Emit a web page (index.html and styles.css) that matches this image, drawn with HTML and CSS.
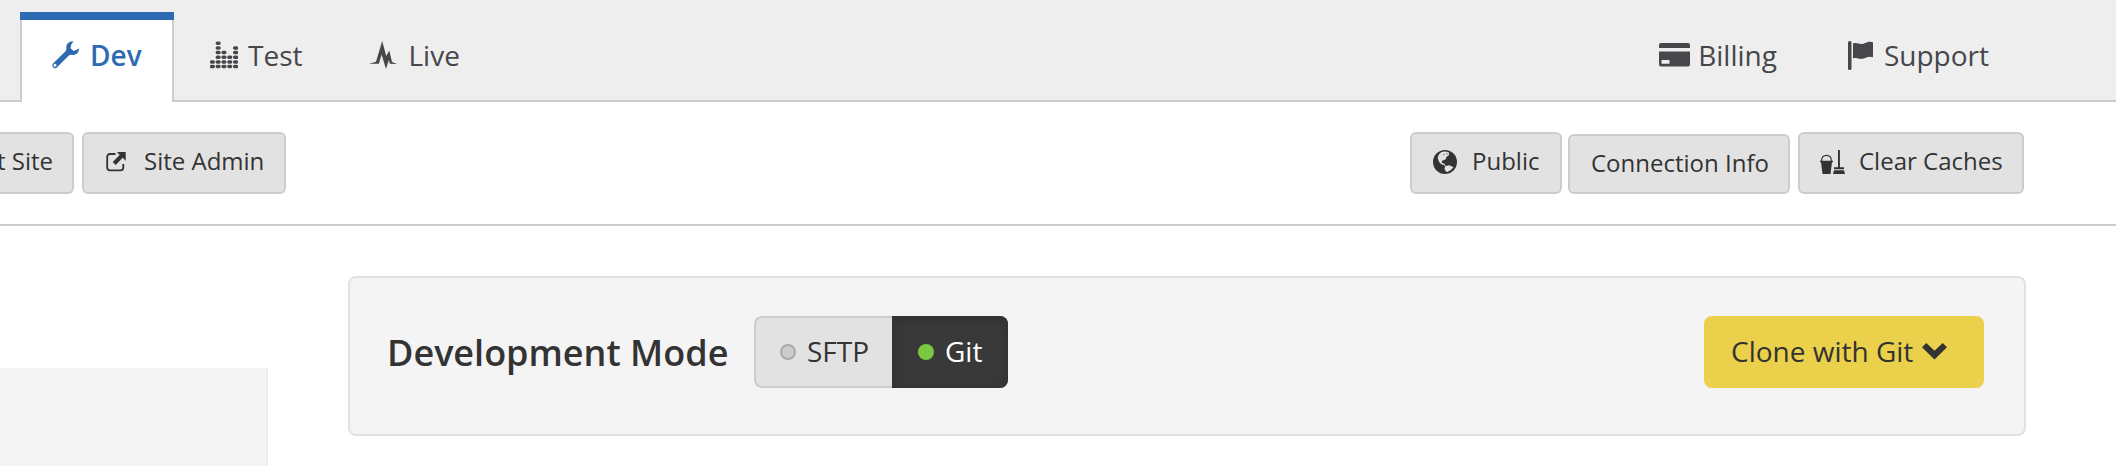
FILE: index.html
```html
<!DOCTYPE html>
<html lang="en">
<head>
<meta charset="utf-8">
<title>Dev environment</title>
<link rel="stylesheet" href="styles.css">
</head>
<body>
<header class="tabs">
  <a class="tab tab-active"><svg class="icon" width="28" height="28" viewBox="0 0 28 28"><path fill-rule="evenodd" d="M21.500 .6C17.500 -.5 13.600 3 14.300 7.300Q14.700 9 13.500 10.200L1.300 22.300Q-.4 24.200 .9 26.200Q2.500 28 4.600 26.700L16.600 14.800Q18 13.700 20 13.900C24 14.200 27.200 11.300 27.200 7.400L21.800 9.900L18.500 7.300L19.300 3.500ZM3 22.800a1.500 1.500 0 1 1 0 3a1.500 1.500 0 1 1 0-3Z"/></svg><span>Dev</span></a>
  <a class="tab tab-test"><svg class="icon" width="28" height="28" viewBox="0 0 28 28"><g fill="none" stroke="currentColor" stroke-width="3.500" stroke-linecap="round"><path d="M1.600 20.900h1.700M1.600 25.600h1.700M7.300 2.200h1.700M7.300 6.900h1.700M7.300 11.600h1.700M7.300 16.300h1.700M7.300 20.900h1.700M7.300 25.600h1.700M13.100 11.600h1.700M13.100 16.300h1.700M13.100 20.900h1.700M13.100 25.600h1.700M18.900 16.300h1.700M18.900 20.900h1.700M18.900 25.600h1.700M24.700 7.100h1.700M24.700 11.600h1.700M24.700 16.300h1.700M24.700 20.900h1.700M24.700 25.600h1.700"/></g></svg><span>Test</span></a>
  <a class="tab tab-live"><svg class="icon" width="28" height="28" viewBox="0 0 28 28"><path d="M0 22.700L7 20.700L13.200 0L17.200 15L20.300 9.500L23 20.900L28 22.900L20.900 22.700L19.900 19L17 28L12.600 13.500L9.900 22.700Z"/></svg><span>Live</span></a>
  <a class="tab tab-billing"><svg class="icon" width="31" height="24" viewBox="0 0 31 24"><path fill-rule="evenodd" d="M2 0h27q2 0 2 2v3H0V2q0-2 2-2ZM0 8.500h31v13q0 2-2 2H2q-2 0-2-2ZM2.500 17v3.700h8V17Z"/></svg><span>Billing</span></a>
  <a class="tab tab-support"><svg class="icon" width="25" height="29" viewBox="0 0 25 29"><rect width="3.500" height="29" rx="1.500"/><path d="M5 2.300C9 1 12 4.200 16 2.500S21.500 .2 25 1.300V16.200C21 15 19 16 16.500 17.300C12.500 18.800 9 16.500 5 17.200Z"/></svg><span>Support</span></a>
</header>
<section class="toolbar">
  <a class="button button-visit"><span>t Site</span></a>
  <a class="button button-admin"><svg class="icon" width="20" height="20" viewBox="0 0 20 20"><path d="M9.500 2H4Q1.200 2 1.200 5v10.500Q1.200 18.300 4 18.300h10.500Q17.300 18.300 17.300 15.500V12" fill="none" stroke="currentColor" stroke-width="1.800"/><path d="M11 0h8.700v8.700l-3-2.900l-7 7.200l-3-3L13.700 2.900Z"/></svg><span>Site Admin</span></a>
  <a class="button button-public"><svg class="icon" width="24" height="24" viewBox="0 0 24 24"><circle cx="12" cy="12" r="12"/><g class="land"><path d="M11.500 1.400C7.500 1.500 4.700 4.700 4.800 8.400Q5.500 12 8.300 14.200L12.300 15.200L8.500 12.400L9.500 10.400L12.500 9.600L13.800 6.400L16.200 5.100L15.600 2Z"/><path d="M12.500 16L16.500 15.300L20.500 17.200Q17.800 20.700 14.400 22Q11.300 21 11.600 18Z"/></g><path d="M10 4.200l2 .3-1 1zM13 3.600l1.500-.4v1.200z"/><path d="M8 13l3.400 1.300.8 2" fill="none" stroke="#e2e2e2" stroke-width="1"/></svg><span>Public</span></a>
  <a class="button button-info"><span>Connection Info</span></a>
  <a class="button button-clear"><svg class="icon" width="25" height="24" viewBox="0 0 25 24"><path d="M1.600 11Q1.600 5.400 6.500 5.400T11.400 11" fill="none" stroke="currentColor" stroke-width="1.100"/><path d="M0 10.800h13v1.500h-1L10.500 24h-8L1 12.300H0ZM18 0h1.900v17.300H24v1.900H14v-1.900h4ZM14 20.200h10L25 24H13Z"/></svg><span>Clear Caches</span></a>
</section>
<main class="content">
  <aside class="sidebar"></aside>
  <section class="panel">
    <h2 class="panel-title">Development Mode</h2>
    <div class="switch">
      <a class="option option-sftp"><i class="dot"></i><span>SFTP</span></a>
      <a class="option option-git"><i class="dot dot-on"></i><span>Git</span></a>
    </div>
    <a class="clone"><span>Clone with Git</span><svg class="icon" width="25" height="17" viewBox="0 0 25 17"><path d="M4.300 0L12.500 7.800L20.700 0L25 4.300L12.500 16.500L0 4.300Z"/></svg></a>
  </section>
</main>
</body>
</html>
```
FILE: styles.css
```css
* { box-sizing: border-box; }
body {
  margin: 0;
  height: 466px;
  overflow: hidden;
  background: #fff;
  color: #333;
  font: 28px/38px "Open Sans", sans-serif;
  white-space: nowrap;
}
.icon { flex: none; fill: currentColor; }

.tabs {
  display: flex;
  height: 102px;
  padding: 12px 0 0 20px;
  background: #eee;
  box-shadow: inset 0 -2px #ccc;
  color: #46464b;
}
.tab { display: flex; align-items: center; height: 90px; padding-bottom: 4px; }
.tab-active {
  width: 154px;
  padding: 0 0 12px 30px;
  gap: 10px;
  background: #fff;
  border: 2px solid #ccc;
  border-top: 0;
  border-bottom: 0;
  color: #2e6ab1;
  font-weight: 600;
  position: relative;
  padding-top: 8px;
}
.tab-active::before {
  content: "";
  position: absolute;
  top: 0;
  left: -2px;
  right: -2px;
  height: 8px;
  background: #2e6ab1;
}
.tab-test { margin-left: 36px; gap: 10px; }
.tab-live { margin-left: 67px; gap: 11px; }
.tab-billing { margin-left: auto; gap: 8px; }
.tab-support { margin: 0 127px 0 71px; gap: 11px; }

.toolbar {
  display: flex;
  align-items: flex-end;
  height: 124px;
  padding: 0 92px 30px 0;
  border-bottom: 2px solid #ccc;
  font-size: 24px;
  line-height: 32px;
}
.button {
  display: flex;
  align-items: center;
  height: 62px;
  padding-bottom: 4px;
  border: 2px solid #ccc;
  border-radius: 6px;
  background: #e2e2e2;
}
.button .icon { margin-top: 2px; }
.button-visit {
  width: 74px;
  padding-right: 19px;
  justify-content: flex-end;
  border-left: 0;
  border-radius: 0 6px 6px 0;
}
.button-admin { width: 204px; margin-left: 8px; padding-left: 22px; gap: 18px; }
.button-public { width: 152px; margin-left: auto; padding-left: 21px; gap: 15px; }
.button-info { width: 222px; height: 60px; margin-left: 6px; padding: 0 0 3px 21px; }
.button-clear { width: 226px; margin-left: 8px; padding-left: 20px; gap: 14px; }
.land { fill: #e2e2e2; }

.content { display: flex; height: 240px; }
.sidebar {
  width: 268px;
  margin-top: 142px;
  background: #f4f4f4;
  border-right: 2px solid #ededed;
}
.panel {
  display: flex;
  align-items: center;
  width: 1678px;
  height: 160px;
  margin: 50px 0 0 80px;
  padding: 0 40px 8px 37px;
  border: 2px solid #e2e2e2;
  border-radius: 8px;
  background: #f4f4f4;
}
.panel-title { margin: 0; padding-top: 2px; width: 367px; font-size: 36px; font-weight: 600; line-height: 48px; }
.switch { display: flex; width: 254px; height: 72px; }
.option { display: flex; align-items: center; gap: 11px; padding-bottom: 2px; }
.option-sftp {
  width: 138px;
  padding-left: 24px;
  border: 2px solid #ccc;
  border-right: 0;
  border-radius: 8px 0 0 8px;
  background: #e2e2e2;
}
.option-git {
  width: 116px;
  padding-left: 26px;
  border-radius: 0 8px 8px 0;
  background: #393939;
  box-shadow: inset 0 3px 12px #303030;
  color: #fff;
}
.dot { width: 16px; height: 16px; margin-top: 2px; border: 2px solid #aaa; border-radius: 50%; background: #ccc; }
.dot-on { border: 0; background: #7ac943; }
.clone {
  display: flex;
  align-items: center;
  gap: 9px;
  width: 280px;
  height: 72px;
  margin-left: auto;
  padding: 0 0 2px 27px;
  border-radius: 8px;
  background: #ebd04b;
}
```
